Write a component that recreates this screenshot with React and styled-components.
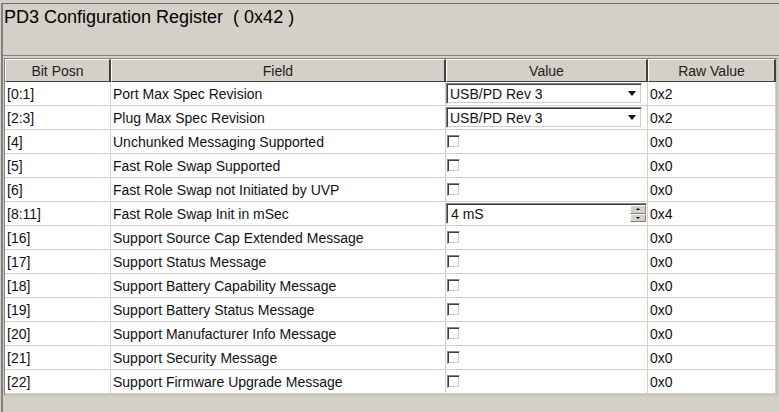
import React from "react"
import styled, { createGlobalStyle } from "styled-components"

const GlobalStyle = createGlobalStyle`
    html, body {
        margin: 0;
        padding: 0;
        background: #d4d0c8;
    }
    body {
        font-family: "Liberation Sans", Arial, sans-serif;
    }
`;

const Page = styled.div`
    width: 779px;
    height: 412px;
    overflow: hidden;
    background: #d4d0c8;
    padding-top: 3px;
    box-sizing: border-box;
`;

const Frame = styled.div`
    margin-left: 1px;
    height: 409px;
    border-top: 1px solid #707070;
    border-left: 2px solid #808080;
    box-sizing: border-box;
    display: flex;
    flex-direction: column;
`;

const Title = styled.div`
    height: 52px;
    padding: 3px 0 0 1px;
    box-sizing: border-box;
    font-size: 18px;
    color: #000;
    white-space: pre;
    border-bottom: 1px solid #808080;
`;

const Grid = styled.div`
    margin-top: 2px;
    margin-left: 1px;
    width: 771px;
    display: grid;
    grid-template-columns: 106px 335px 202px 128px;
    grid-auto-rows: 24px;
    grid-template-rows: 23px;
    background: #fff;
    border-top: 1px solid #808080;
    border-left: 1px solid #808080;
    border-bottom: 2px solid #c8c4bc;
    border-right: 2px solid #c8c4bc;
    box-sizing: content-box;
`;

const HeadCell = styled.div`
    background: #d4d0c8;
    border-top: 1px solid #fff;
    border-left: 1px solid #fff;
    border-right: 2px solid #404040;
    border-bottom: 1px solid #404040;
    box-sizing: border-box;
    display: flex;
    align-items: center;
    justify-content: center;
    font-size: 14px;
    color: #222;
`;

const Cell = styled.div`
    border-right: 1px solid #d4d0c8;
    border-bottom: 1px solid #d4d0c8;
    box-sizing: border-box;
    display: flex;
    align-items: center;
    padding-left: ${p => (p.$ctl ? "0" : "2px")};
    font-size: 14px;
    color: #111;
    white-space: nowrap;
`;

const Combo = styled.div`
    width: 196px;
    height: 21px;
    box-sizing: border-box;
    border-top: 1px solid #808080;
    border-left: 1px solid #808080;
    border-bottom: 1px solid #fff;
    border-right: 1px solid #fff;
    box-shadow: inset 1px 1px 0 #404040, inset -1px -1px 0 #d4d0c8;
    background: #fff;
    display: flex;
    align-items: center;
    justify-content: space-between;
    padding: 0 5px 0 3px;
    font-size: 14px;
`;

const Arrow = styled.span`
    width: 0;
    height: 0;
    border-left: 4px solid transparent;
    border-right: 4px solid transparent;
    border-top: 5px solid #000;
`;

const Spin = styled.div`
    width: 201px;
    height: 21px;
    box-sizing: border-box;
    border-top: 1px solid #808080;
    border-left: 1px solid #808080;
    border-bottom: 1px solid #fff;
    border-right: 1px solid #fff;
    box-shadow: inset 1px 1px 0 #404040;
    background: #fff;
    display: flex;
    align-items: center;
    justify-content: space-between;
    padding-left: 4px;
    font-size: 14px;
`;

const SpinButtons = styled.div`
    display: flex;
    flex-direction: column;
    align-self: stretch;
    padding: 1px 0;
`;

const SpinButton = styled.div`
    flex: 1;
    width: 16px;
    background: #d4d0c8;
    border-top: 1px solid #fff;
    border-left: 1px solid #fff;
    border-bottom: 1px solid #808080;
    border-right: 1px solid #808080;
    box-sizing: border-box;
    display: flex;
    align-items: center;
    justify-content: center;

    span {
        width: 0;
        height: 0;
        border-left: 2px solid transparent;
        border-right: 2px solid transparent;
        ${p => p.$up ? "border-bottom: 2px solid #000;" : "border-top: 2px solid #000;"}
    }
`;

const Check = styled.div`
    width: 13px;
    height: 13px;
    margin-left: 1px;
    box-sizing: border-box;
    background: #fff;
    border-top: 1px solid #808080;
    border-left: 1px solid #808080;
    border-bottom: 1px solid #fff;
    border-right: 1px solid #fff;
    box-shadow: inset 1px 1px 0 #404040, inset -1px -1px 0 #d4d0c8;
`;

const rows = [
    { bit: "[0:1]", field: "Port Max Spec Revision", kind: "combo", value: "USB/PD Rev 3", raw: "0x2" },
    { bit: "[2:3]", field: "Plug Max Spec Revision", kind: "combo", value: "USB/PD Rev 3", raw: "0x2" },
    { bit: "[4]", field: "Unchunked Messaging Supported", kind: "check", raw: "0x0" },
    { bit: "[5]", field: "Fast Role Swap Supported", kind: "check", raw: "0x0" },
    { bit: "[6]", field: "Fast Role Swap not Initiated by UVP", kind: "check", raw: "0x0" },
    { bit: "[8:11]", field: "Fast Role Swap Init in mSec", kind: "spin", value: "4 mS", raw: "0x4" },
    { bit: "[16]", field: "Support Source Cap Extended Message", kind: "check", raw: "0x0" },
    { bit: "[17]", field: "Support Status Message", kind: "check", raw: "0x0" },
    { bit: "[18]", field: "Support Battery Capability Message", kind: "check", raw: "0x0" },
    { bit: "[19]", field: "Support Battery Status Message", kind: "check", raw: "0x0" },
    { bit: "[20]", field: "Support Manufacturer Info Message", kind: "check", raw: "0x0" },
    { bit: "[21]", field: "Support Security Message", kind: "check", raw: "0x0" },
    { bit: "[22]", field: "Support Firmware Upgrade Message", kind: "check", raw: "0x0" },
];

const ValueControl = ({ row }) => {
    if (row.kind === "combo") {
        return <Combo>{row.value}<Arrow /></Combo>
    }
    if (row.kind === "spin") {
        return (
            <Spin>
                {row.value}
                <SpinButtons>
                    <SpinButton $up><span /></SpinButton>
                    <SpinButton><span /></SpinButton>
                </SpinButtons>
            </Spin>
        )
    }
    return <Check />
}

export default function App() {
    return (
        <>
            <GlobalStyle />
            <Page>
                <Frame>
                    <Title>PD3 Configuration Register  ( 0x42 )</Title>
                    <Grid>
                        {["Bit Posn", "Field", "Value", "Raw Value"].map(h => <HeadCell key={h}>{h}</HeadCell>)}
                        {rows.map(row => (
                            <React.Fragment key={row.bit}>
                                <Cell>{row.bit}</Cell>
                                <Cell>{row.field}</Cell>
                                <Cell $ctl>
                                    <ValueControl row={row} />
                                </Cell>
                                <Cell>{row.raw}</Cell>
                            </React.Fragment>
                        ))}
                    </Grid>
                </Frame>
            </Page>
        </>
    )
}
